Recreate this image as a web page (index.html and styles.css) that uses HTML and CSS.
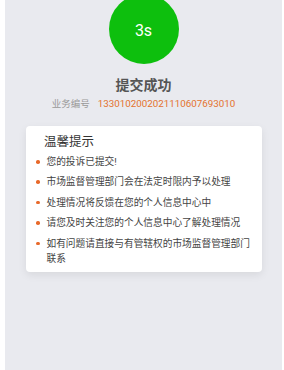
FILE: index.html
```html
<!DOCTYPE html>
<html lang="zh-CN">
<head>
    <meta charset="UTF-8">
    <meta name="viewport" content="width=device-width, initial-scale=1.0">
    <title>提交成功</title>
    <link rel="stylesheet" href="styles.css">
</head>
<body>

    <div class="page">
        <div class="countdown">3s</div>

        <h1 class="result-title">提交成功</h1>
        <div class="result-no">
            <span class="label">业务编号</span>
            <span class="number">1330102002021110607693010</span>
        </div>

        <div class="tips">
            <h2>温馨提示</h2>
            <ul>
                <li><span class="dot"></span><span>您的投诉已提交!</span></li>
                <li><span class="dot"></span><span>市场监督管理部门会在法定时限内予以处理</span></li>
                <li><span class="dot"></span><span>处理情况将反馈在您的个人信息中心中</span></li>
                <li><span class="dot"></span><span>请您及时关注您的个人信息中心了解处理情况</span></li>
                <li><span class="dot"></span><span>如有问题请直接与有管辖权的市场监督管理部门联系</span></li>
            </ul>
        </div>
    </div>

</body>
</html>
```

FILE: styles.css
```css
* {
    box-sizing: border-box;
    margin: 0;
    padding: 0;
}
body {
    font-family: Roboto, "Noto Sans CJK SC", sans-serif;
    background-color: #fff;
}
.page {
    margin: 0 2px 0 5px;
    min-height: 100vh;
    background-color: #e9eaef;
    overflow: hidden;
    display: flex;
    flex-direction: column;
    align-items: center;
}
.countdown {
    width: 70px;
    height: 70px;
    margin-top: -6px;
    border-radius: 50%;
    background-color: #0dbf0d;
    color: #fff;
    font-size: 16px;
    display: flex;
    justify-content: center;
    align-items: center;
    padding-top: 2px;
}
.result-title {
    margin-top: 11px;
    font-size: 14px;
    line-height: 20px;
    font-weight: bold;
    color: #555;
}
.result-no {
    margin-top: 2px;
    font-size: 9.5px;
    line-height: 14px;
    display: flex;
    gap: 8px;
}
.result-no .label {
    color: #999;
}
.result-no .number {
    color: #e4722e;
    font-size: 9.8px;
}
.tips {
    width: 236px;
    margin-top: 15px;
    margin-left: 1px;
    background: #fff;
    border-radius: 4px;
    padding: 7px 8px 6px 10px;
    box-shadow: 0 3px 8px rgba(0, 0, 0, 0.08);
}
.tips h2 {
    font-size: 12.5px;
    font-weight: normal;
    line-height: 18px;
    color: #333;
    padding-left: 8px;
}
.tips ul {
    list-style: none;
    margin-top: 3px;
}
.tips li {
    display: flex;
    align-items: flex-start;
    gap: 7px;
    font-size: 9.7px;
    line-height: 15px;
    color: #444;
    margin-top: 5.4px;
}
.tips li:first-child {
    margin-top: 0;
}
.tips .dot {
    flex: none;
    width: 3.5px;
    height: 3.5px;
    margin-top: 6px;
    border-radius: 50%;
    background-color: #e8692a;
}
```
